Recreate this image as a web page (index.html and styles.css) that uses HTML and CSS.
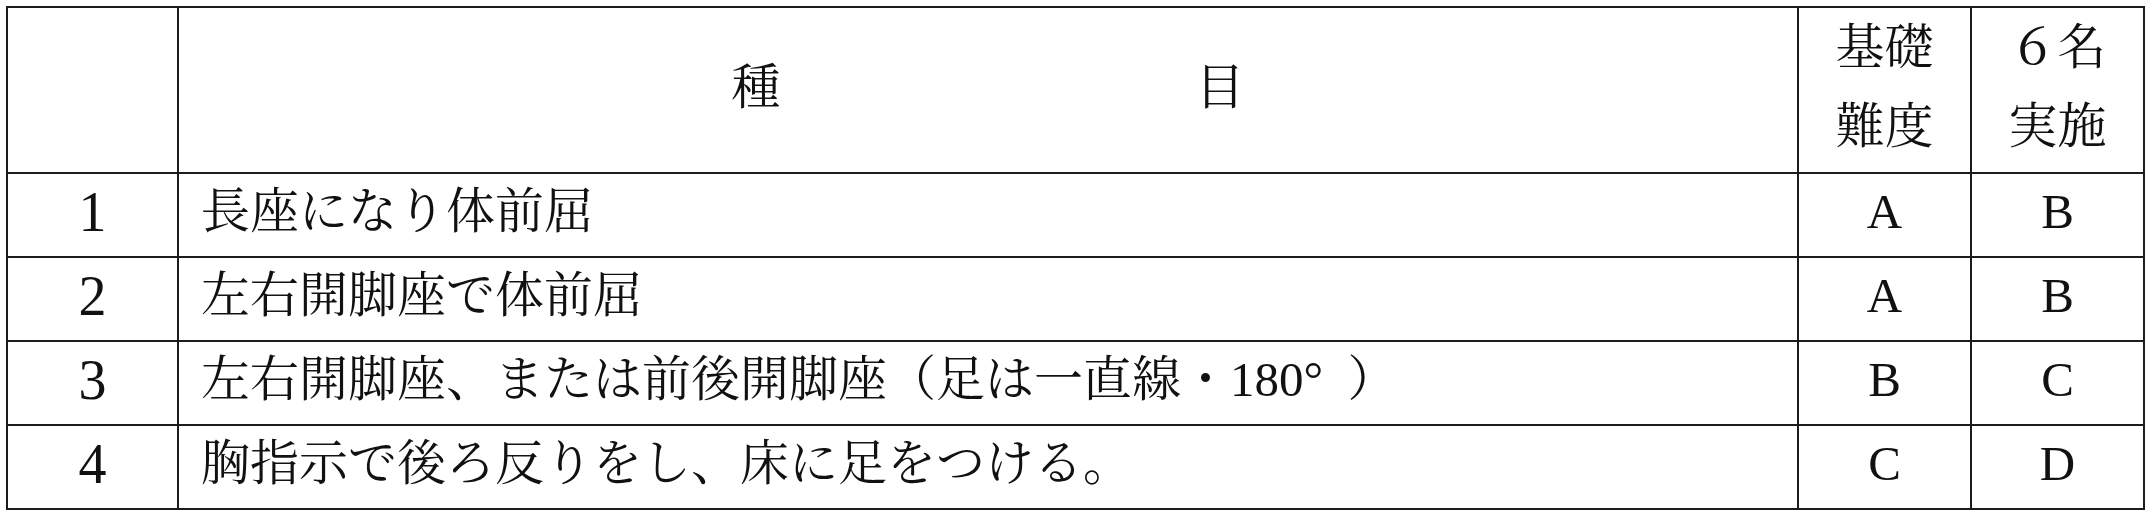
FILE: index.html
```html
<!DOCTYPE html>
<html lang="ja">
<head>
<meta charset="utf-8">
<title>種目</title>
<link rel="stylesheet" href="styles.css">
</head>
<body>
<table class="grid">
  <colgroup>
    <col class="c-no">
    <col class="c-item">
    <col class="c-lv">
    <col class="c-six">
  </colgroup>
  <thead>
    <tr class="head">
      <th></th>
      <th><div class="spread"><span>種</span><span>目</span></div></th>
      <th class="mid">基礎<br>難度</th>
      <th class="mid">６名<br>実施</th>
    </tr>
  </thead>
  <tbody>
    <tr class="row first">
      <td class="num">1</td>
      <td class="item">長座になり体前屈</td>
      <td class="mid">A</td>
      <td class="mid">B</td>
    </tr>
    <tr class="row">
      <td class="num">2</td>
      <td class="item">左右開脚座で体前屈</td>
      <td class="mid">A</td>
      <td class="mid">B</td>
    </tr>
    <tr class="row">
      <td class="num">3</td>
      <td class="item">左右開脚座、または前後開脚座（足は一直線・180<span class="deg">°</span>）</td>
      <td class="mid">B</td>
      <td class="mid">C</td>
    </tr>
    <tr class="row">
      <td class="num">4</td>
      <td class="item">胸指示で後ろ反りをし、床に足をつける。</td>
      <td class="mid">C</td>
      <td class="mid">D</td>
    </tr>
  </tbody>
</table>
</body>
</html>
```

FILE: styles.css
```css
html, body {
  margin: 0;
  padding: 0;
  background: #ffffff;
}

body {
  padding: 6px 0 0 6px;
  font-family: "Liberation Serif", "Noto Serif CJK JP", "Noto Sans CJK JP", serif;
  font-size: 49px;
  color: #111111;
}

.grid {
  table-layout: fixed;
  border-collapse: separate;
  border-spacing: 0;
  width: 2139px;
  box-sizing: border-box;
  border-top: 2px solid #1c1c1c;
  border-left: 2px solid #1c1c1c;
}

.c-no { width: 171px; }
.c-item { width: 1620px; }
.c-lv { width: 173px; }
.c-six { width: 173px; }

.grid th,
.grid td {
  box-sizing: border-box;
  border-right: 2px solid #1c1c1c;
  border-bottom: 2px solid #1c1c1c;
  padding: 0 0 6px 0;
  font-weight: 400;
  line-height: 76px;
  vertical-align: middle;
  white-space: nowrap;
}

.head th {
  height: 166px;
  line-height: 79px;
}

.row td {
  height: 84px;
}

.row.first td {
  height: 83px;
}

.mid {
  text-align: center;
}

.num {
  text-align: center;
  font-size: 56px;
}

.grid td.item {
  text-align: left;
  padding-left: 22px;
}

.deg {
  display: inline-block;
  width: 44px;
}

.spread {
  display: flex;
  justify-content: center;
  gap: 415px;
}
```
